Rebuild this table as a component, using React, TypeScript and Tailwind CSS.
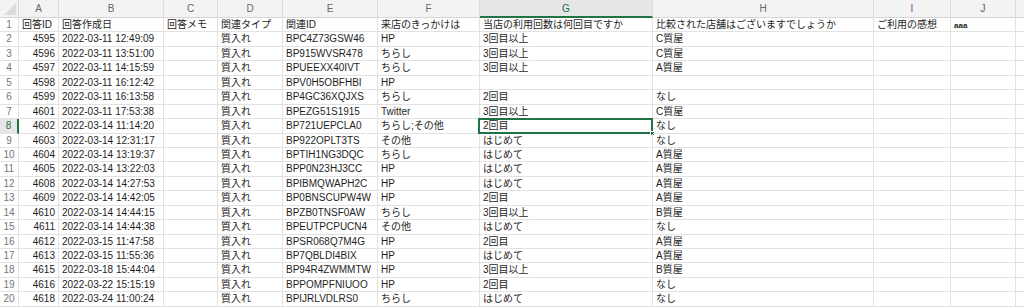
const COLS = ['A', 'B', 'C', 'D', 'E', 'F', 'G', 'H', 'I', 'J'];
const WIDTHS = [40, 105, 54, 65, 95, 102, 173, 221, 77, 65];

const HEADERS = ['回答ID', '回答作成日', '回答メモ', '関連タイプ', '関連ID', '来店のきっかけは', '当店の利用回数は何回目ですか', '比較された店舗はございますでしょうか', 'ご利用の感想', 'aaa'];

const ROWS: [string, string, string, string, string, string][] = [
  ['4595', '2022-03-11 12:49:09', 'BPC4Z73GSW46', 'HP', '3回目以上', 'C質屋'],
  ['4596', '2022-03-11 13:51:00', 'BP915WVSR478', 'ちらし', '3回目以上', 'C質屋'],
  ['4597', '2022-03-11 14:15:59', 'BPUEEXX40IVT', 'ちらし', '3回目以上', 'A質屋'],
  ['4598', '2022-03-11 16:12:42', 'BPV0H5OBFHBI', 'HP', '', ''],
  ['4599', '2022-03-11 16:13:58', 'BP4GC36XQJXS', 'ちらし', '2回目', 'なし'],
  ['4601', '2022-03-11 17:53:38', 'BPEZG51S1915', 'Twitter', '3回目以上', 'C質屋'],
  ['4602', '2022-03-14 11:14:20', 'BP721UEPCLA0', 'ちらし;その他', '2回目', 'なし'],
  ['4603', '2022-03-14 12:31:17', 'BP922OPLT3TS', 'その他', 'はじめて', 'なし'],
  ['4604', '2022-03-14 13:19:37', 'BPTIH1NG3DQC', 'ちらし', 'はじめて', 'A質屋'],
  ['4605', '2022-03-14 13:22:03', 'BPP0N23HJ3CC', 'HP', 'はじめて', 'A質屋'],
  ['4608', '2022-03-14 14:27:53', 'BPIBMQWAPH2C', 'HP', 'はじめて', 'A質屋'],
  ['4609', '2022-03-14 14:42:05', 'BP0BNSCUPW4W', 'HP', '2回目', 'A質屋'],
  ['4610', '2022-03-14 14:44:15', 'BPZB0TNSF0AW', 'ちらし', '3回目以上', 'B質屋'],
  ['4611', '2022-03-14 14:44:38', 'BPEUTPCPUCN4', 'その他', 'はじめて', 'なし'],
  ['4612', '2022-03-15 11:47:58', 'BPSR068Q7M4G', 'HP', '2回目', 'A質屋'],
  ['4613', '2022-03-15 11:55:36', 'BP7QBLDI4BIX', 'HP', 'はじめて', 'A質屋'],
  ['4615', '2022-03-18 15:44:04', 'BP94R4ZWMMTW', 'HP', '3回目以上', 'B質屋'],
  ['4616', '2022-03-22 15:15:19', 'BPPOMPFNIUOO', 'HP', '2回目', 'なし'],
  ['4618', '2022-03-24 11:00:24', 'BPIJRLVDLRS0', 'ちらし', 'はじめて', 'なし'],
];

const font = { fontFamily: '"Liberation Sans", "Noto Sans CJK JP", sans-serif' };
const gridCols = 'grid grid-cols-[19px_40px_105px_54px_65px_95px_102px_173px_221px_77px_65px_1fr]';

function Cell({ children, right, selected }: { children?: React.ReactNode; right?: boolean; selected?: boolean }) {
  return (
    <div
      className={`relative h-[14.45px] border-r border-b border-[#e2e2e2] px-[3px] text-[10px] leading-[14px] text-[#1e1e1e] whitespace-nowrap overflow-hidden ${right ? 'text-right' : ''} ${selected ? 'overflow-visible' : ''}`}
    >
      {children}
      {selected && (
        <>
          <div className="absolute -left-[2px] -top-[1px] -right-[1px] -bottom-[1px] border-2 border-[#217346] pointer-events-none" />
          <div className="absolute -right-[3px] -bottom-[3px] w-[5px] h-[5px] bg-[#217346] border border-white" />
        </>
      )}
    </div>
  );
}

export default function App() {
  return (
    <div className="w-[1024px] h-[307px] overflow-hidden bg-white" style={font}>
      <div className={`${gridCols} h-[18px] bg-[#f3f3f3]`}>
        <div className="relative border-r border-b border-[#d6d6d6]">
          <div className="absolute right-[2px] bottom-[2px] w-0 h-0 border-l-[12px] border-l-transparent border-b-[12px] border-b-[#dcdcdc]" />
        </div>
        {COLS.map((c) => (
          <div
            key={c}
            className={`flex items-center justify-center border-r border-[#dcdcdc] text-[10px] ${c === 'G' ? 'bg-[#e6e6e6] text-[#217346] border-b-2 border-b-[#217346]' : 'text-[#666] border-b border-b-[#d6d6d6]'}`}
          >
            {c}
          </div>
        ))}
        <div className="border-b border-[#d6d6d6]" />
      </div>

      <div className={gridCols}>
        <div className="h-[14.45px] border-r border-b border-[#e2e2e2] text-center text-[10px] leading-[14px] text-[#777]">1</div>
        {HEADERS.map((h, i) => (
          <Cell key={i}>
            <span className={i === 9 ? 'text-[8px] font-bold' : ''}>{h}</span>
          </Cell>
        ))}
        <div className="border-b border-[#e2e2e2]" />

        {ROWS.map((r, idx) => {
          const n = idx + 2;
          const sel = n === 8;
          return (
            <div key={n} className="contents">
              <div
                className={`h-[14.45px] border-r border-b border-[#e2e2e2] text-center text-[10px] leading-[14px] ${sel ? 'text-[#217346] bg-[#e6e6e6] border-r-2 border-r-[#217346]' : 'text-[#777]'}`}
              >
                {n}
              </div>
              <Cell right>{r[0]}</Cell>
              <Cell>{r[1]}</Cell>
              <Cell />
              <Cell>質入れ</Cell>
              <Cell>{r[2]}</Cell>
              <Cell>{r[3]}</Cell>
              <Cell selected={sel}>{r[4]}</Cell>
              <Cell>{r[5]}</Cell>
              <Cell />
              <Cell />
              <div className="border-b border-[#e2e2e2]" />
            </div>
          );
        })}
      </div>
    </div>
  );
}
